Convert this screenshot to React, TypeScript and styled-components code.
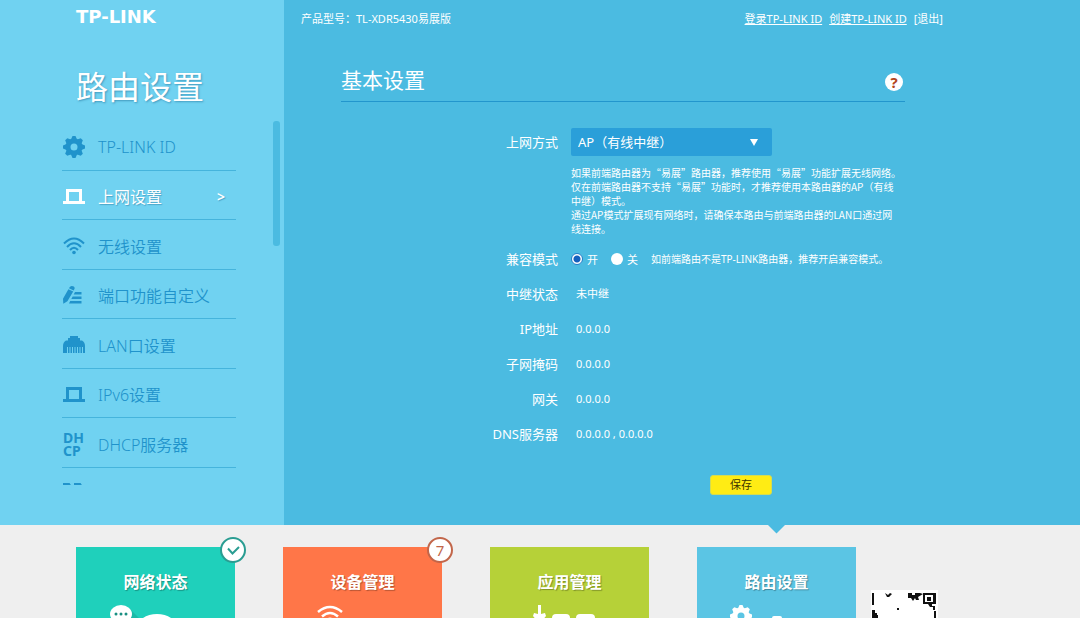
import React from "react";
import styled, { createGlobalStyle, css } from "styled-components";

const latin = `"Noto Sans", "Open Sans", "Noto Sans CJK SC", sans-serif`;
const cjk = `"Noto Sans CJK SC", "Noto Sans", sans-serif`;

const GlobalStyle = createGlobalStyle`
  *, *::before, *::after { box-sizing: border-box; }
  body { margin: 0; background: #efefef; font-family: ${latin}; color: #fff; }
  h1, h2, h3, p, ul, dl, dd, dt { margin: 0; padding: 0; font-weight: 400; }
  ul { list-style: none; }
  a { color: inherit; }
  svg { display: block; }
`;

const Page = styled.div`
  display: flex;
  flex-direction: column;
  height: 100vh;
  overflow: hidden;
`;

const Upper = styled.div`
  display: flex;
  flex: none;
`;

const Sidebar = styled.aside`
  flex: none;
  width: 284px;
  background: #70d2f1;
`;

const Logo = styled.div`
  padding: 6px 0 0 76px;
  font: 700 18px/22px "DejaVu Sans", sans-serif;
`;

const SideTitle = styled.h1`
  padding: 39px 0 0 76px;
  font-size: 32px;
  line-height: 40px;
  font-weight: 400;
  text-shadow: 1px 1px 2px rgba(30, 110, 150, 0.55);
`;

const MenuScroll = styled.nav`
  display: flex;
  justify-content: space-between;
  align-items: flex-start;
  height: 364px;
  margin-top: 14px;
  padding: 0 4px 0 62px;
  overflow: hidden;
`;

const Menu = styled.ul`
  display: grid;
  grid-auto-rows: 1fr;
  flex: none;
  width: 174px;
  height: 396px;
`;

const MenuItem = styled.li`
  display: flex;
  border-bottom: 1px solid #45b4dc;
`;

const MenuLink = styled.a<{ $active?: boolean }>`
  display: flex;
  flex: 1;
  align-items: center;
  gap: 12px;
  padding: 3px 11px 0 0;
  font-size: 16px;
  font-weight: 350;
  text-decoration: none;
  white-space: nowrap;
  color: #2093cb;
  ${(p) =>
    p.$active &&
    css`
      color: #fff;
      font-weight: 400;
      text-shadow: 1px 1px 1px rgba(30, 110, 150, 0.45);
    `}
`;

const MenuIcon = styled.span`
  display: grid;
  place-items: center;
  width: 24px;
  height: 24px;
`;

const DhcpMark = styled.span`
  width: 24px;
  padding-left: 1px;
  font-size: 14px;
  line-height: 13px;
  font-weight: 700;
`;

const Arrow = styled.span`
  margin-left: auto;
  font-size: 14px;
  font-weight: 600;
`;

const ScrollThumb = styled.div`
  flex: none;
  width: 7px;
  height: 125px;
  border-radius: 3px;
  background: #4bbbe1;
`;

const Main = styled.main`
  flex: 1;
  min-width: 0;
  padding: 9px 16px 30px 17px;
  background: #4bbbe1;
`;

const TopBar = styled.header`
  display: flex;
  justify-content: space-between;
  max-width: 642px;
  font-size: 11px;
  line-height: 20px;
`;

const TopLinks = styled.nav`
  display: flex;
  gap: 7px;
`;

const TopLink = styled.a<{ $plain?: boolean }>`
  text-decoration: ${(p) => (p.$plain ? "none" : "underline")};
`;

const Panel = styled.section`
  max-width: 564px;
  margin: 36px 0 0 40px;
`;

const PanelHead = styled.div`
  display: flex;
  justify-content: space-between;
  align-items: center;
  height: 37px;
  padding: 0 2px 7px 0;
  border-bottom: 1px solid #2296cd;
`;

const PanelTitle = styled.h2`
  font-size: 21px;
  line-height: 30px;
`;

const HelpButton = styled.button`
  width: 18px;
  height: 18px;
  margin-top: 5px;
  padding: 0;
  border: 0;
  border-radius: 50%;
  background: #fff;
  color: #b4441c;
  font: 700 15px/18px "Noto Sans", sans-serif;
`;

const Form = styled.form`
  padding-top: 26px;
`;

const FormRow = styled.div<{ $tall?: boolean }>`
  display: grid;
  grid-template-columns: 217px 1fr;
  column-gap: 13px;
  align-items: center;
  min-height: ${(p) => (p.$tall ? "28px" : "35px")};
`;

const labelText = css`
  font-size: 13px;
  line-height: 20px;
  text-align: right;
`;

const Label = styled.label`
  ${labelText}
`;

const LabelSpan = styled.span`
  ${labelText}
`;

const SelectBox = styled.div`
  position: relative;
  width: 201px;
`;

const Select = styled.select`
  appearance: none;
  display: block;
  width: 100%;
  height: 28px;
  padding: 0 30px 0 7px;
  border: 0;
  border-radius: 2px;
  background: #2a9fd9;
  color: #fff;
  font: 400 13px/28px ${latin};
`;

const SelectArrow = styled.svg`
  position: absolute;
  right: 14px;
  top: 11px;
  pointer-events: none;
`;

const Help = styled.div`
  padding: 10px 0 5px 230px;
  font: 400 10px/14px ${cjk};
  white-space: nowrap;
`;

const Radios = styled.div`
  display: flex;
  align-items: center;
  white-space: nowrap;
  font-size: 11px;
`;

const RadioLabel = styled.label`
  display: flex;
  align-items: center;
  gap: 4px;
  margin-right: 13px;
`;

const Radio = styled.input`
  appearance: none;
  width: 12px;
  height: 12px;
  margin: 0;
  border-radius: 50%;
  background: #fff;
  &:checked {
    border: 1px solid #2a7fc9;
    background: radial-gradient(circle, #1560bd 3px, #fff 4px);
  }
`;

const Hint = styled.span`
  font-size: 10px;
`;

const Value = styled.output`
  padding-left: 5px;
  font-size: 11px;
  line-height: 20px;
`;

const Actions = styled.div`
  padding: 24px 0 0 369px;
`;

const SaveButton = styled.button`
  display: block;
  width: 62px;
  height: 20px;
  padding: 0;
  border: 1px solid #d3dc52;
  border-radius: 3px;
  background: #ffec14;
  color: #3c3400;
  font: 400 11px/18px ${latin};
`;

const Dock = styled.footer`
  display: flex;
  flex: 1;
  gap: 48px;
  padding: 22px 0 0 76px;
  overflow: hidden;
  background: #efefef;
`;

const Card = styled.a<{ $color: string }>`
  position: relative;
  flex: none;
  display: flex;
  flex-direction: column;
  align-items: center;
  width: 159px;
  height: 159px;
  padding-top: 24px;
  background: ${(p) => p.$color};
  text-decoration: none;
`;

const CardTitle = styled.h3`
  margin-bottom: 10px;
  font-size: 16px;
  line-height: 22px;
  font-weight: 700;
  text-shadow: 1px 1px 1px rgba(0, 0, 0, 0.3);
`;

const Badge = styled.span<{ $color: string }>`
  position: absolute;
  top: -10px;
  right: -11px;
  display: grid;
  place-items: center;
  width: 26px;
  height: 26px;
  border: 2px solid ${(p) => p.$color};
  border-radius: 50%;
  background: #fff;
  color: ${(p) => p.$color};
  font-size: 15px;
  line-height: 20px;
`;

const Pointer = styled.svg`
  position: absolute;
  top: -22px;
  left: 71px;
`;

const QrCode = styled.svg`
  flex: none;
  margin: 43px 0 0 -33px;
`;

const Gear = ({ cx, cy }: { cx: number; cy: number }) => (
  <g transform={`translate(${cx} ${cy})`}>
    <circle r="6" fill="none" stroke="currentColor" strokeWidth="5" />
    {[0, 45, 90, 135, 180, 225, 270, 315].map((a) => (
      <path key={a} d="M-3 -7.500L-1.500 -11H1.500L3 -7.500Z" fill="currentColor" transform={`rotate(${a})`} />
    ))}
  </g>
);

const GearIcon = () => (
  <svg width="22" height="22" viewBox="0 0 22 22">
    <Gear cx={11} cy={11} />
  </svg>
);

const LaptopIcon = () => (
  <svg width="22" height="15" viewBox="0 0 22 15" fill="currentColor">
    <path fillRule="evenodd" d="M3 0H19V12H22V15H0V12H3ZM6 3V12H16V3Z" />
  </svg>
);

const WifiIcon = () => (
  <svg width="22" height="18" viewBox="0 0 22 18" fill="none" stroke="currentColor" strokeWidth="2">
    <path d="M1 6.500Q11 -3.500 21 6.500M4 10Q11 2.500 18 10M7 13Q11 8.500 15 13" />
    <circle cx="11" cy="15.500" r="1.800" fill="currentColor" stroke="none" />
  </svg>
);

const PencilIcon = () => (
  <svg width="22" height="18" viewBox="0 0 22 18" fill="currentColor">
    <path d="M6.800 1Q8.500 -0.700 10.800 0.500Q12.200 1.400 11.300 3.300L10.700 4.400L6 2.300ZM5.400 3.200L10.200 5.400L4.400 15.200L0.300 17.800L0 12.800Z" />
    <path d="M12 6H18.500V8.500H10.700ZM9.700 10.500H18.500V13H8.300ZM7.200 15H18.500V17.500H6Z" />
  </svg>
);

const PortIcon = () => (
  <svg width="22" height="17" viewBox="0 0 22 17" fill="currentColor">
    <path d="M7 0H15V2H17V4.500H19Q22 6 22 10V17H20V11H19V17H17.500V11H16.500V17H15V11H14V17H12.500V11H11.500V17H10V11H9V17H7.500V11H6.500V17H5V11H4V17H0V10Q0 6 3 4.500H5V2H7Z" />
  </svg>
);

const DashIcon = () => (
  <svg width="22" height="20" viewBox="0 0 22 20" fill="none" stroke="currentColor" strokeWidth="2">
    <path d="M1 1H6L8 4V6L6 9H1ZM12 1H17L19 4V6L17 9H12ZM1 19V12L7 19V12M18 12H12V15H18V19H12" />
  </svg>
);

const menu = [
  { text: "TP-LINK ID", icon: <GearIcon /> },
  { text: "上网设置", icon: <LaptopIcon />, active: true },
  { text: "无线设置", icon: <WifiIcon /> },
  { text: "端口功能自定义", icon: <PencilIcon /> },
  { text: "LAN口设置", icon: <PortIcon /> },
  { text: "IPv6设置", icon: <LaptopIcon /> },
  { text: "DHCP服务器", icon: null },
];

const status = [
  ["中继状态", "未中继"],
  ["IP地址", "0.0.0.0"],
  ["子网掩码", "0.0.0.0"],
  ["网关", "0.0.0.0"],
  ["DNS服务器", "0.0.0.0 , 0.0.0.0"],
];

const StatusArt = () => (
  <svg width="99" height="60" viewBox="0 0 99 60" fill="#fff">
    <path d="M24 6L60 42V60H20Z" fill="#17a493" opacity="0.5" />
    <ellipse cx="15" cy="11" rx="11" ry="9" />
    <path d="M10 17L8 24L18 19Z" />
    <ellipse cx="51" cy="25" rx="20" ry="14" />
    <g fill="#1a8f82">
      <circle cx="10" cy="11" r="1.500" />
      <circle cx="15" cy="11" r="1.500" />
      <circle cx="20" cy="11" r="1.500" />
    </g>
  </svg>
);

const DeviceArt = () => (
  <svg width="99" height="60" viewBox="0 0 99 60" fill="none" stroke="#fff" strokeWidth="2.500">
    <path d="M5 9Q17 -1 29 9M9 13.500Q17 6.500 25 13.500M13 18Q17 13.500 21 18" />
  </svg>
);

const AppsArt = () => (
  <svg width="99" height="60" viewBox="0 0 99 60" fill="#fff">
    <path d="M18 2H21V11L25 10L26 13L19.500 21L13 13L14 10L18 11Z" />
    <rect x="32" y="11" width="18" height="18" rx="4" />
    <rect x="56" y="11" width="19" height="18" rx="4" />
  </svg>
);

const RouterArt = () => (
  <svg width="99" height="60" viewBox="0 0 99 60" fill="#fff" color="#fff">
    <Gear cx={14} cy={13} />
    <rect x="45" y="13" width="10" height="14" rx="2" />
  </svg>
);

export default function App() {
  return (
    <>
      <GlobalStyle />
      <Page lang="zh-CN">
        <Upper>
          <Sidebar>
            <Logo>TP-LINK</Logo>
            <SideTitle>路由设置</SideTitle>
            <MenuScroll>
              <Menu>
                {menu.map((m) => (
                  <MenuItem key={m.text}>
                    <MenuLink href="#" $active={m.active}>
                      {m.icon ? (
                        <MenuIcon>{m.icon}</MenuIcon>
                      ) : (
                        <DhcpMark>
                          DH
                          <br />
                          CP
                        </DhcpMark>
                      )}
                      {m.text}
                      {m.active && <Arrow>&gt;</Arrow>}
                    </MenuLink>
                  </MenuItem>
                ))}
                <MenuItem>
                  <MenuLink as="span">
                    <MenuIcon>
                      <DashIcon />
                    </MenuIcon>
                  </MenuLink>
                </MenuItem>
              </Menu>
              <ScrollThumb />
            </MenuScroll>
          </Sidebar>
          <Main>
            <TopBar>
              <span>产品型号：TL-XDR5430易展版</span>
              <TopLinks>
                <TopLink href="#">登录TP-LINK ID</TopLink>
                <TopLink href="#">创建TP-LINK ID</TopLink>
                <TopLink href="#" $plain>
                  [退出]
                </TopLink>
              </TopLinks>
            </TopBar>
            <Panel>
              <PanelHead>
                <PanelTitle>基本设置</PanelTitle>
                <HelpButton type="button">?</HelpButton>
              </PanelHead>
              <Form onSubmit={(e) => e.preventDefault()}>
                <FormRow $tall>
                  <Label htmlFor="mode">上网方式</Label>
                  <SelectBox>
                    <Select id="mode">
                      <option>AP（有线中继）</option>
                    </Select>
                    <SelectArrow width="8" height="7" viewBox="0 0 8 7">
                      <path d="M0 0H8L4 7Z" fill="#fff" />
                    </SelectArrow>
                  </SelectBox>
                </FormRow>
                <Help>
                  <p>如果前端路由器为“易展”路由器，推荐使用“易展”功能扩展无线网络。</p>
                  <p>
                    仅在前端路由器不支持“易展”功能时，才推荐使用本路由器的AP（有线
                    <br />
                    中继）模式。
                  </p>
                  <p>
                    通过AP模式扩展现有网络时，请确保本路由与前端路由器的LAN口通过网
                    <br />
                    线连接。
                  </p>
                </Help>
                <FormRow>
                  <LabelSpan id="compat">兼容模式</LabelSpan>
                  <Radios role="radiogroup" aria-labelledby="compat">
                    <RadioLabel>
                      <Radio type="radio" name="compat" defaultChecked />开
                    </RadioLabel>
                    <RadioLabel>
                      <Radio type="radio" name="compat" />关
                    </RadioLabel>
                    <Hint>如前端路由不是TP-LINK路由器，推荐开启兼容模式。</Hint>
                  </Radios>
                </FormRow>
                {status.map(([name, value], i) => (
                  <FormRow key={name}>
                    <Label htmlFor={`status-${i}`}>{name}</Label>
                    <Value id={`status-${i}`}>{value}</Value>
                  </FormRow>
                ))}
                <Actions>
                  <SaveButton type="submit">保存</SaveButton>
                </Actions>
              </Form>
            </Panel>
          </Main>
        </Upper>
        <Dock>
          <Card href="#" $color="#1fd0bb">
            <CardTitle>网络状态</CardTitle>
            <StatusArt />
            <Badge $color="#2a9d92">
              <svg width="13" height="9" viewBox="0 0 13 9" fill="none" stroke="currentColor" strokeWidth="2">
                <path d="M1 2.500L5.500 7.500L12 1" />
              </svg>
            </Badge>
          </Card>
          <Card href="#" $color="#ff7648">
            <CardTitle>设备管理</CardTitle>
            <DeviceArt />
            <Badge $color="#c2664a">7</Badge>
          </Card>
          <Card href="#" $color="#b6d138">
            <CardTitle>应用管理</CardTitle>
            <AppsArt />
          </Card>
          <Card href="#" $color="#5bc5e4">
            <Pointer width="17" height="9" viewBox="0 0 17 9">
              <path d="M0 0H17L8.500 8.500Z" fill="#4bbbe1" />
            </Pointer>
            <CardTitle>路由设置</CardTitle>
            <RouterArt />
          </Card>
          <QrCode width="67" height="67" viewBox="0 0 67 67">
            <rect width="67" height="67" fill="#fff" />
            <g fill="#111">
              <path d="M1 3H3V15H1ZM14 3L17 5L19 3L21 4L18 7H16ZM37 3H41V5H44V3H49L52 4L47 7L48 10H45L44 8L42 11L40 8H37ZM26 18H28V20H26ZM1 20H4V23H6V25H7V28H1ZM57 14H61V16H64V20H62V17H59ZM63 21H65V28H63Z" />
              <path fillRule="evenodd" d="M52 3H65V14H52ZM54 5V12H62V5ZM56 7H60V11H56Z" />
            </g>
          </QrCode>
        </Dock>
      </Page>
    </>
  );
}
